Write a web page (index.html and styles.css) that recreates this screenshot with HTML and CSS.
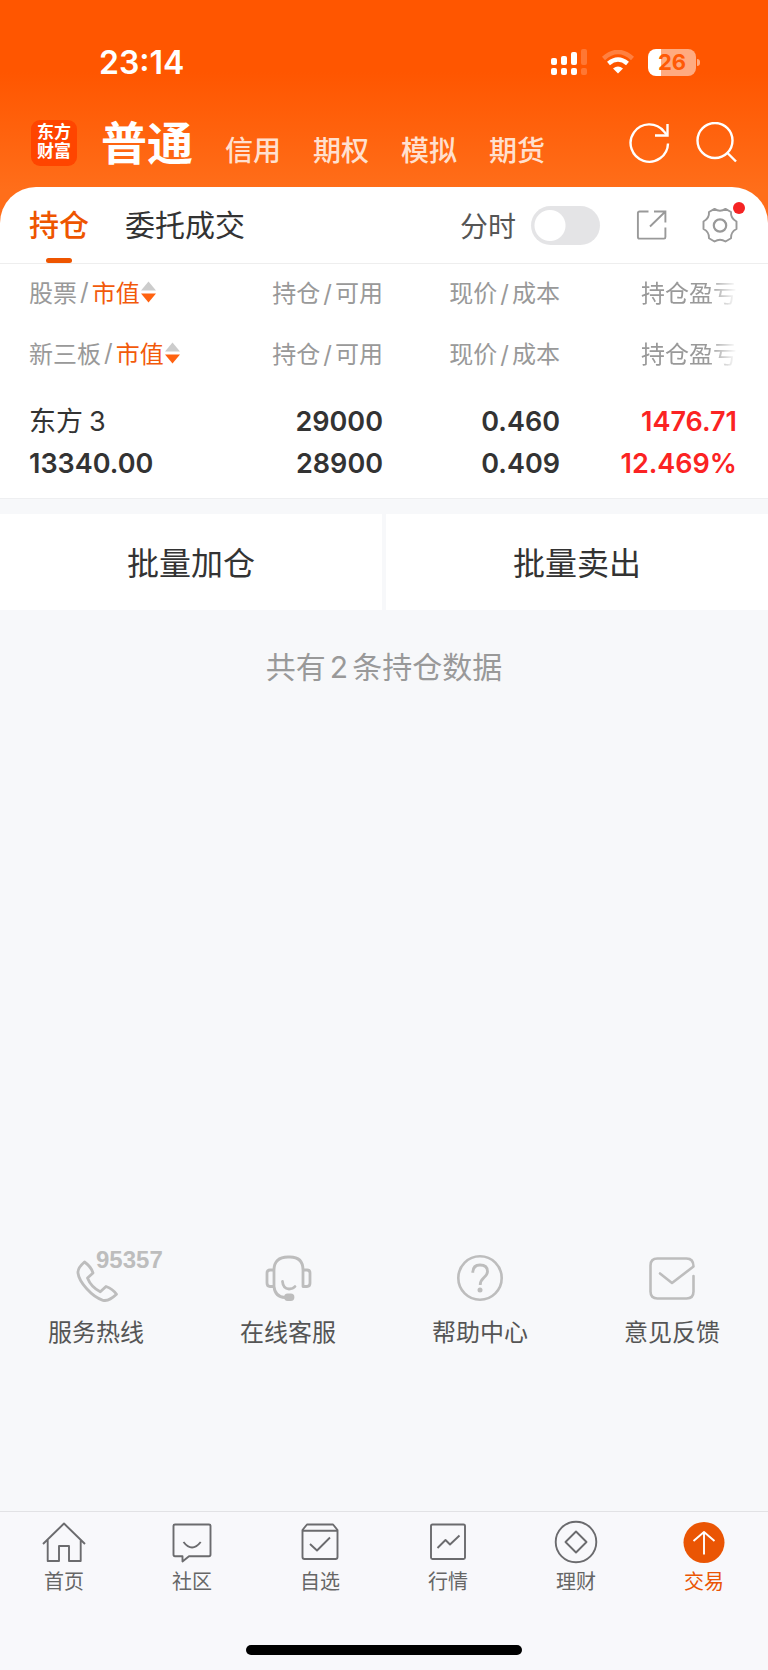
FILE: index.html
```html
<!DOCTYPE html>
<html lang="zh-CN">
<head>
<meta charset="utf-8">
<meta name="viewport" content="width=device-width, initial-scale=1">
<title>交易 - 持仓</title>
<link rel="stylesheet" href="styles.css">
</head>
<body>
<header class="top">
  <div class="status">
    <time class="clock">23:14</time>
    <div class="status-icons">
      <svg class="ico-signal" width="38" height="28" viewBox="0 0 38 28" fill="#fff" aria-hidden="true">
        <rect x="1" y="10" width="6" height="7" rx="2"/><rect x="11" y="8" width="6" height="9" rx="2"/><rect x="21" y="4" width="6" height="13" rx="2"/><rect x="31" y="1" width="6" height="16" rx="2" opacity=".2"/>
        <rect x="1" y="20" width="6" height="7" rx="2"/><rect x="11" y="20" width="6" height="7" rx="2"/><rect x="21" y="20" width="6" height="7" rx="2"/><rect x="31" y="20" width="6" height="7" rx="2" opacity=".2"/>
      </svg>
      <svg class="ico-wifi" width="32" height="24" viewBox="0 0 32 24" fill="none" stroke="#fff" aria-hidden="true">
        <path d="M1.500 8.500Q16-4.500 30.500 8.500" stroke-width="4.500" opacity=".25"/>
        <path d="M6.500 13.500Q16 5.500 25.500 13.500" stroke-width="4.500"/>
        <path d="M11 18.500Q16 14.500 21 18.500L16 23.500Z" fill="#fff" stroke="none"/>
      </svg>
      <div class="battery"><span>26</span></div>
    </div>
  </div>
  <div class="brand-row">
    <a class="logo" href="#">东方<br>财富</a>
    <nav class="accounts">
      <a class="account current" href="#">普通</a>
      <a class="account" href="#">信用</a>
      <a class="account" href="#">期权</a>
      <a class="account" href="#">模拟</a>
      <a class="account" href="#">期货</a>
    </nav>
    <div class="head-actions">
      <button type="button" aria-label="刷新">
        <svg width="42" height="42" viewBox="0 0 42 42" fill="none" stroke="#fff" stroke-width="2.400">
          <path d="M40 21.500A18.700 18.700 0 1 1 36 9.500L39 13"/><path d="M39.500 2V13.500H27"/>
        </svg>
      </button>
      <button type="button" aria-label="搜索">
        <svg width="42" height="42" viewBox="0 0 42 42" fill="none" stroke="#fff" stroke-width="2.400">
          <circle cx="20" cy="18.500" r="17.500"/><path d="M32 30.500L41 39.500"/>
        </svg>
      </button>
    </div>
  </div>
</header>

<main class="panel">
  <div class="toolbar">
    <nav class="views">
      <a class="view current" href="#">持仓</a>
      <a class="view" href="#">委托成交</a>
    </nav>
    <div class="tools">
      <label class="switch-label" for="minute">分时</label>
      <input class="switch" id="minute" type="checkbox" role="switch">
      <button class="tool" type="button" aria-label="分享">
        <svg width="32" height="32" viewBox="0 0 32 32" fill="none" stroke="#999" stroke-width="1.900">
          <path d="M12.500 2.500H3.500Q1.900 2.500 1.900 4V28Q1.900 29.600 3.500 29.600H28Q29.400 29.600 29.400 28V18.500"/>
          <path d="M18 2.500H29.400V13.500M29.400 2.500L14 17.500"/>
        </svg>
      </button>
      <button class="tool gear" type="button" aria-label="设置">
        <svg width="36" height="36" viewBox="0 0 36 36" fill="none" stroke="#999" stroke-width="1.900" stroke-linejoin="round">
          <path d="M12.500 1.900Q18 5.500 23.500 1.900L29 5Q28.500 11.200 34.500 14.500V22Q28.500 25 29 31.300L23.500 34.500Q18 31 12.500 34.500L7 31.300Q7.500 25 1.500 22V14.500Q7.500 11.200 7 5Z"/>
          <circle cx="18" cy="18.500" r="6.200" stroke-width="2.200"/>
        </svg>
      </button>
    </div>
  </div>

  <table class="holdings">
    <thead>
      <tr>
        <th scope="col"><span class="sort">股票<i>/</i><b>市值</b><svg width="17" height="24" viewBox="0 0 17 24"><path d="M8.500 1.500L16 10.500H1Z" fill="#ccc"/><path d="M8.500 22.500L16 13.500H1Z" fill="#ff6210"/></svg></span></th>
        <th scope="col">持仓<i>/</i>可用</th>
        <th scope="col">现价<i>/</i>成本</th>
        <th scope="col"><span class="fade">持仓盈亏</span></th>
      </tr>
      <tr>
        <th scope="col"><span class="sort">新三板<i>/</i><b>市值</b><svg width="17" height="24" viewBox="0 0 17 24"><path d="M8.500 1.500L16 10.500H1Z" fill="#ccc"/><path d="M8.500 22.500L16 13.500H1Z" fill="#ff6210"/></svg></span></th>
        <th scope="col">持仓<i>/</i>可用</th>
        <th scope="col">现价<i>/</i>成本</th>
        <th scope="col"><span class="fade">持仓盈亏</span></th>
      </tr>
    </thead>
    <tbody>
      <tr>
        <td><span class="name">东方<span>3</span></span><br>13340.00</td>
        <td>29000<br>28900</td>
        <td>0.460<br>0.409</td>
        <td class="gain">1476.71<br>12.469%</td>
      </tr>
    </tbody>
  </table>
</main>

<div class="batch">
  <button type="button">批量加仓</button>
  <button type="button">批量卖出</button>
</div>
<p class="count">共有<span>2</span>条持仓数据</p>

<nav class="services">
  <a href="#">
    <span class="hotline">
      <svg width="48" height="48" viewBox="0 0 48 48" fill="none" stroke="#bdbdbd" stroke-width="2.800" stroke-linejoin="round">
        <path d="M12.500 8C9 11 5.500 14.500 6 19C7 28 20 43 31 46.300C36.500 47.500 40.500 44 44.500 40.300Q41 35 34 32.500L28.300 37.800Q19 33 15.500 24L21 19Q19 12.500 12.500 8Z"/>
      </svg>
      <b>95357</b>
    </span>
    服务热线
  </a>
  <a href="#">
    <svg width="48" height="48" viewBox="0 0 48 48" fill="none" stroke="#bdbdbd" stroke-width="2.800" stroke-linejoin="round" stroke-linecap="round">
      <path d="M10 33V16Q10 3 24 3H26Q39 3 39 16V32.500M10 16H6Q3 16 3 19V29Q3 32.500 6 32.500H10M39 16H43Q46 16 46 19V29Q46 32.500 43 32.500H39M10 32.500Q11 43 21 43.500"/>
      <path d="M18.500 27.500Q19 34.500 25 35Q29 35 31 32.500"/><rect x="21.500" y="41" width="7.500" height="4.500" rx="2.200" fill="#bdbdbd"/>
    </svg>
    在线客服
  </a>
  <a href="#">
    <svg width="48" height="48" viewBox="0 0 48 48" fill="none" stroke="#bdbdbd" stroke-width="2.600">
      <circle cx="24" cy="24" r="21.700"/><path d="M16.800 18.800Q16.800 11 24 11Q31.500 11 31.500 17.500Q31.500 20.500 28 23.500Q24.200 27 24.200 31" stroke-width="2.800"/><circle cx="24" cy="36" r="2.500" fill="#bdbdbd" stroke="none"/>
    </svg>
    帮助中心
  </a>
  <a href="#">
    <svg width="48" height="48" viewBox="0 0 48 48" fill="none" stroke="#bdbdbd" stroke-width="2.600" stroke-linecap="round" stroke-linejoin="round">
      <path d="M45.500 22V37.500Q45.500 44.500 38.500 44.500H9.500Q2.500 44.500 2.500 37.500V11.500Q2.500 4.500 9.500 4.500H38.500Q45.500 4.500 45.500 12.500L24 29L12 19.500"/>
    </svg>
    意见反馈
  </a>
</nav>

<footer class="tabbar">
  <nav class="tabs">
    <a href="#">
      <svg width="44" height="44" viewBox="0 0 44 44" fill="none" stroke="#6b6b6e" stroke-width="1.900" stroke-linejoin="round"><path d="M1 24L22 3.500L43 24M5.700 20V41H17V26H27V41H38.700V20"/></svg>
      首页
    </a>
    <a href="#">
      <svg width="44" height="44" viewBox="0 0 44 44" fill="none" stroke="#6b6b6e" stroke-width="1.900" stroke-linejoin="round"><path d="M5 4.500H39Q40.500 4.500 40.500 6V34.500Q40.500 36.200 39 36.200H19L12.500 41.500V36.200H5Q3.500 36.200 3.500 34.500V6Q3.500 4.500 5 4.500ZM13.500 22Q22 33 30.700 22"/></svg>
      社区
    </a>
    <a href="#">
      <svg width="44" height="44" viewBox="0 0 44 44" fill="none" stroke="#6b6b6e" stroke-width="1.900" stroke-linejoin="round"><path d="M4.500 10L9 4.500H35L39.500 10V37Q39.500 39 37.500 39H6.500Q4.500 39 4.500 37ZM4.500 10.800H39.500M12 24L19 30.500L32 17.500"/></svg>
      自选
    </a>
    <a href="#">
      <svg width="44" height="44" viewBox="0 0 44 44" fill="none" stroke="#6b6b6e" stroke-width="1.900" stroke-linejoin="round"><rect x="5" y="4.500" width="34" height="34.500" rx="1.500"/><path d="M11.500 28L19.500 20L24 24.500L33.500 15.500"/></svg>
      行情
    </a>
    <a href="#">
      <svg width="44" height="44" viewBox="0 0 44 44" fill="none" stroke="#6b6b6e" stroke-width="1.900" stroke-linejoin="round"><circle cx="22" cy="22" r="20.300"/><path d="M22 11.500L32.500 22L22 32.500L11.500 22Z"/></svg>
      理财
    </a>
    <a class="current" href="#">
      <svg width="44" height="44" viewBox="0 0 44 44" fill="none" stroke="#fff" stroke-width="1.900" stroke-linejoin="round"><circle cx="22" cy="22.500" r="20.500" fill="#ea5504" stroke="none"/><path d="M22 34.500V12M11.500 21L22 12L32.500 21"/></svg>
      交易
    </a>
  </nav>
  <div class="home-bar"></div>
</footer>
</body>
</html>
```
FILE: styles.css
```css
* { box-sizing: border-box; }

body {
  margin: 0;
  min-height: 100vh;
  display: flex;
  flex-direction: column;
  background: #f7f8fa;
  color: #333;
  font-family: Inter, "Noto Sans CJK SC", sans-serif;
  font-size: 24px;
}

a { color: inherit; text-decoration: none; }
button { border: 0; padding: 0; background: none; color: inherit; font: inherit; cursor: pointer; }
svg { display: block; flex: none; }

/* Header */
.top {
  padding-bottom: 40px;
  background: linear-gradient(#ff5600 72px, #ff6e1a 190px);
  color: #fff;
}
.status {
  display: flex;
  justify-content: space-between;
  align-items: center;
  height: 88px;
  padding: 36px 68px 0 99px;
}
.clock { font-size: 32px; font-weight: 600; }
.status-icons { display: flex; align-items: center; }
.ico-wifi { margin: 0 14px; }
.battery {
  position: relative;
  width: 48px;
  height: 27px;
  margin-right: 4px;
  border-radius: 8px;
  background: linear-gradient(90deg, #fff 13px, #ffab80 13px);
  color: #ff5a06;
  font-size: 22px;
  font-weight: 700;
  line-height: 27px;
  text-align: center;
}
.battery::after {
  content: "";
  position: absolute;
  top: 10px;
  right: -4px;
  width: 3px;
  height: 7px;
  border-radius: 0 3px 3px 0;
  background: #ffab80;
}
.brand-row {
  display: flex;
  align-items: center;
  height: 100px;
  padding: 10px 31px 0 31px;
}
.logo {
  width: 46px;
  height: 46px;
  padding-top: 3px;
  border-radius: 9px;
  background: #ff4500;
  font-size: 17px;
  font-weight: 700;
  line-height: 19px;
  text-align: center;
}
.accounts {
  flex: 1;
  display: flex;
  align-items: flex-end;
  gap: 32px;
  margin-left: 24px;
}
.account { color: #ffe0cf; font-size: 28px; font-weight: 500; line-height: 48px; }
.account.current { color: #fff; font-size: 46px; font-weight: 700; line-height: 64px; }
.head-actions { display: flex; gap: 25px; }

/* Holdings panel */
.panel {
  margin-top: -41px;
  border-bottom: 1px solid #eeeff1;
  border-radius: 36px 36px 0 0;
  background: #fff;
}
.toolbar {
  display: flex;
  justify-content: space-between;
  height: 77px;
  padding: 0 30px 0 29px;
  border-bottom: 1px solid #eee;
}
.views { display: flex; gap: 36px; }
.view { position: relative; font-size: 30px; line-height: 77px; }
.view.current { color: #ee5500; font-weight: 500; }
.view.current::after {
  content: "";
  position: absolute;
  left: 17px;
  right: 17px;
  bottom: 0;
  height: 5px;
  border-radius: 3px;
  background: #ee5500;
}
.tools { display: flex; align-items: center; }
.switch-label { color: #555; font-size: 28px; }
.switch {
  appearance: none;
  width: 69px;
  height: 39px;
  margin: 0 36px 0 15px;
  border-radius: 20px;
  background: radial-gradient(circle at 19px 50%, #fff 15px, #e4e4e6 16px);
}
.tool + .tool { margin-left: 34px; }
.gear { position: relative; }
.gear::after {
  content: "";
  position: absolute;
  top: -5px;
  right: -7px;
  width: 12px;
  height: 12px;
  border-radius: 50%;
  background: #f52323;
}

.holdings {
  width: calc(100% - 60px);
  margin: 0 31px 0 29px;
  border-collapse: collapse;
  table-layout: fixed;
  text-align: right;
}
.holdings th {
  height: 61px;
  padding: 0 0 6px;
  color: #999;
  font-weight: 400;
  white-space: nowrap;
}
.holdings th i { padding: 0 3px; font-style: normal; }
.holdings th:first-child, .holdings td:first-child { text-align: left; }
.holdings td {
  padding: 15px 0 13px;
  font-size: 27px;
  font-weight: 600;
  line-height: 42px;
  white-space: nowrap;
}
.holdings .name { font-weight: 400; }
.name span { padding-left: 6px; }
.holdings .gain { color: #fb2323; }
.sort { display: flex; align-items: center; }
.sort b { color: #f25a0a; font-weight: 400; }
.fade { -webkit-mask-image: linear-gradient(90deg, #000 70%, transparent); mask-image: linear-gradient(90deg, #000 70%, transparent); }

/* Batch actions */
.batch { display: grid; grid-template-columns: 1fr 1fr; gap: 4px; margin-top: 15px; }
.batch button { height: 96px; padding-bottom: 3px; background: #fff; font-size: 32px; }
.count { margin: 35px 0; color: #999; font-size: 30px; line-height: 44px; text-align: center; }
.count span { padding: 0 4px; }

/* Service shortcuts */
.services { display: grid; grid-template-columns: repeat(4, 1fr); margin: auto 0 160px; color: #555; }
.services a { display: flex; flex-direction: column; align-items: center; gap: 13px; line-height: 36px; }
.hotline { position: relative; }
.hotline b {
  position: absolute;
  top: -6px;
  left: 24px;
  color: #bdbdbd;
  font-family: "Liberation Sans", sans-serif;
  line-height: 24px;
}

/* Bottom tab bar */
.tabbar { padding-bottom: 15px; border-top: 1px solid #e2e2e5; background: #f8f8fb; }
.tabs { display: grid; grid-template-columns: repeat(6, 1fr); padding-top: 8px; color: #666; }
.tabs a { display: flex; flex-direction: column; align-items: center; gap: 3px; font-size: 20px; line-height: 30px; }
.tabs .current { color: #ea5504; }
.home-bar { width: 36%; height: 10px; margin: 48px auto 0; border-radius: 5px; background: #000; }
```
